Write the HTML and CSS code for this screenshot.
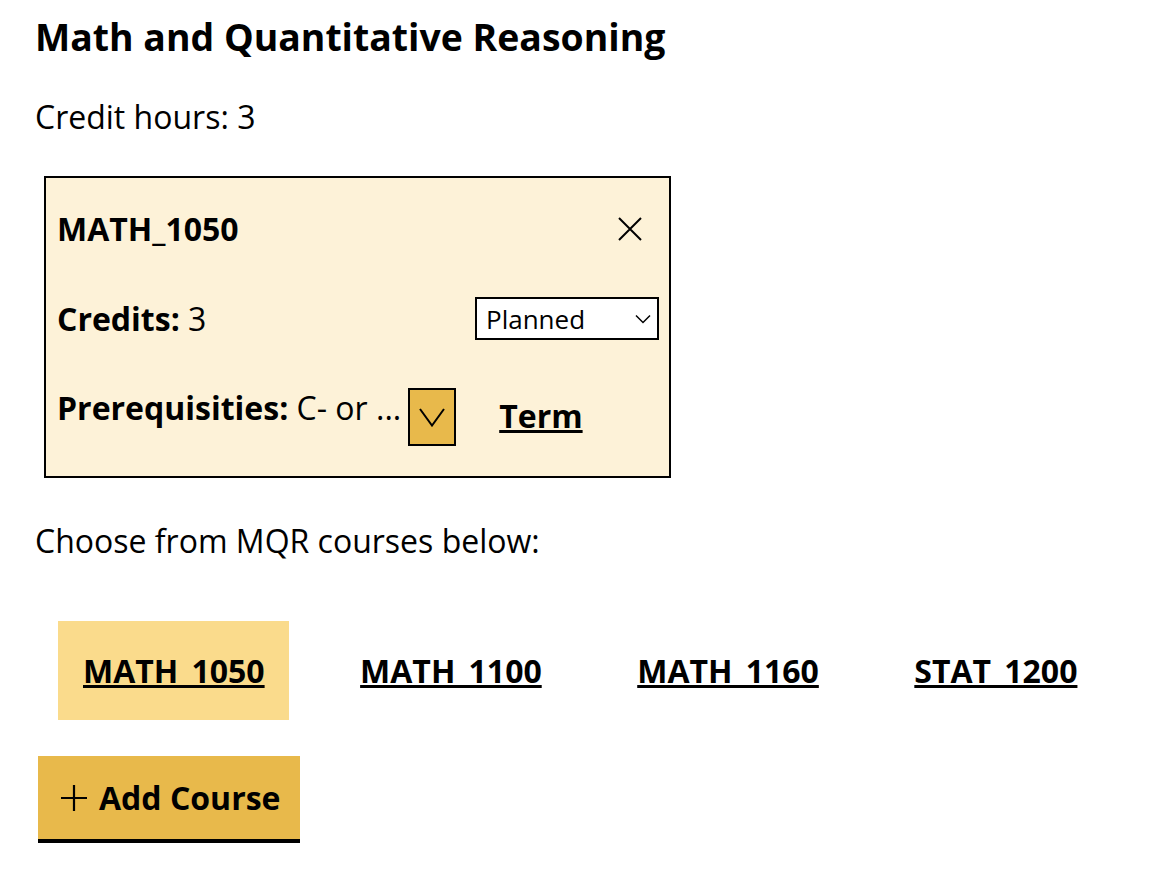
FILE: index.html
```html
<!DOCTYPE html>
<html lang="en">
<head>
<meta charset="utf-8">
<title>MQR</title>
<link rel="stylesheet" href="styles.css">
</head>
<body>
<main class="page">
  <h2 class="title">Math and Quantitative Reasoning</h2>
  <p class="hours">Credit hours: 3</p>
  <section class="card">
    <div class="row row-head">
      <span class="code">MATH_1050</span>
      <button class="close" aria-label="Remove">
        <svg width="24" height="24" viewBox="0 0 24 24"><path d="M1 1 L23 23 M23 1 L1 23" stroke="#000" stroke-width="2" fill="none"/></svg>
      </button>
    </div>
    <div class="row row-credits">
      <span class="field"><b>Credits:</b> 3</span>
      <div class="select">
        <span>Planned</span>
        <svg width="16" height="10" viewBox="0 0 16 10"><path d="M1 1.5 L8 8.5 L15 1.5" stroke="#000" stroke-width="1.5" fill="none"/></svg>
      </div>
    </div>
    <div class="row row-pre">
      <span class="field"><b>Prerequisities:</b> C- or ...</span>
      <button class="expand" aria-label="Expand">
        <svg width="26" height="19" viewBox="0 0 26 19"><path d="M1 1 L13 17.5 L25 1" stroke="#000" stroke-width="2" fill="none"/></svg>
      </button>
      <a class="term" href="#">Term</a>
    </div>
  </section>
  <p class="choose">Choose from MQR courses below:</p>
  <nav class="tabs">
    <a class="tab active" href="#">MATH_1050</a>
    <a class="tab" href="#">MATH_1100</a>
    <a class="tab" href="#">MATH_1160</a>
    <a class="tab" href="#">STAT_1200</a>
  </nav>
  <button class="add">
    <svg width="26" height="26" viewBox="0 0 26 26"><path d="M13 0 V26 M0 13 H26" stroke="#000" stroke-width="2.2" fill="none"/></svg>
    <span>Add Course</span>
  </button>
</main>
</body>
</html>
```
FILE: styles.css
```css
* { box-sizing: border-box; }
body {
  margin: 0;
  font-family: "Open Sans", "Noto Sans", sans-serif;
  color: #000;
  background: #fff;
}
.page {
  padding: 12px 35px;
}
.title {
  margin: 0;
  font-size: 37.4px;
  font-weight: 700;
  line-height: 50px;
}
.hours {
  margin: 35px 0 0;
  font-size: 32px;
  line-height: 40px;
}
.card {
  margin: 39px 0 0 9px;
  width: 627px;
  height: 302px;
  border: 2px solid #000;
  background: #fdf2d8;
  padding: 31px 10px 0 11px;
  display: flex;
  flex-direction: column;
  gap: 48px;
}
.row {
  display: flex;
  align-items: center;
  justify-content: space-between;
  font-size: 32px;
  line-height: 40px;
}
.code { font-weight: 700; }
.close {
  border: 0;
  background: none;
  padding: 0;
  margin-right: 17px;
  display: flex;
}
.select {
  width: 184px;
  height: 43px;
  background: #fff;
  border: 2px solid #000;
  display: flex;
  align-items: center;
  justify-content: space-between;
  padding: 0 6px 0 9px;
  font-size: 26px;
  line-height: 36px;
}
.row-pre {
  justify-content: flex-start;
  align-items: flex-start;
}
.expand {
  margin-left: 7px;
  width: 48px;
  height: 58px;
  border: 2px solid #000;
  background: #e8b94b;
  display: flex;
  align-items: center;
  justify-content: center;
  padding: 0;
}
.term {
  margin-left: 43px;
  margin-top: 8px;
  color: #000;
  font-weight: 700;
  text-decoration: underline;
  text-decoration-thickness: 3px;
}
.choose {
  margin: 43px 0 0;
  font-size: 32px;
  line-height: 40px;
}
.tabs {
  display: flex;
  gap: 46.5px;
  margin: 60px 0 0 23px;
}
.tab {
  display: flex;
  align-items: center;
  height: 99px;
  padding: 0 24px 0 25px;
  color: #000;
  font-size: 32px;
  line-height: 40px;
  font-weight: 700;
  text-decoration: underline;
  text-decoration-thickness: 3px;
}
.tab.active { background: #fadb8c; }
.add {
  margin: 36px 0 0 3px;
  height: 87px;
  width: 262px;
  border: 0;
  border-bottom: 4px solid #000;
  background: #e8b94b;
  display: flex;
  align-items: center;
  gap: 12px;
  padding: 0 0 0 23px;
  font-family: inherit;
  font-size: 32px;
  line-height: 40px;
  font-weight: 700;
  color: #000;
}
```
